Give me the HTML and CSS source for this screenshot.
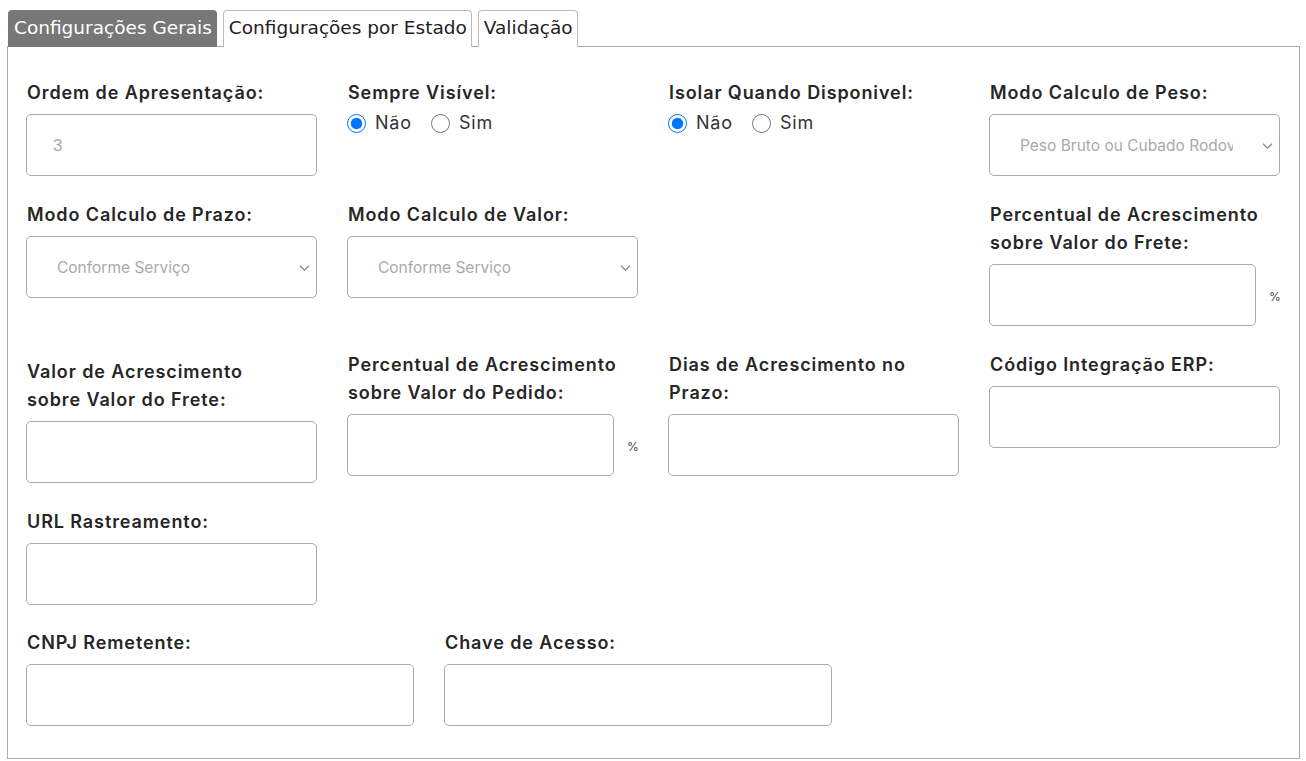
FILE: index.html
```html
<!DOCTYPE html>
<html lang="pt-BR">
<head>
    <meta charset="UTF-8">
    <meta name="viewport" content="width=device-width, initial-scale=1.0">
    <title>Configurações da Transportadora</title>
    <link rel="stylesheet" href="styles.css">
</head>

<body>
    <div class="tabs">
        <a class="tab active">Configurações Gerais</a>
        <a class="tab">Configurações por Estado</a>
        <a class="tab">Validação</a>
    </div>

    <div class="panel">
        <div class="form-grid">
            <div class="form-group">
                <label for="ordem">Ordem de Apresentação:</label>
                <input type="text" id="ordem" class="field" value="3">
            </div>
            <div class="form-group">
                <label>Sempre Visível:</label>
                <div class="radio-row">
                    <label class="radio"><input type="radio" name="visivel" checked> Não</label>
                    <label class="radio"><input type="radio" name="visivel"> Sim</label>
                </div>
            </div>
            <div class="form-group">
                <label>Isolar Quando Disponivel:</label>
                <div class="radio-row">
                    <label class="radio"><input type="radio" name="isolar" checked> Não</label>
                    <label class="radio"><input type="radio" name="isolar"> Sim</label>
                </div>
            </div>
            <div class="form-group">
                <label for="modoPeso">Modo Calculo de Peso:</label>
                <div class="select-wrap">
                    <select id="modoPeso" class="field">
                        <option>Peso Bruto ou Cubado Rodoviário</option>
                    </select>
                    <svg class="chevron" width="11" height="6" viewBox="0 0 11 6"><path d="M1 .8l4.5 4.4 4.5-4.4" fill="none" stroke="#8a8a8a" stroke-width="1.3"/></svg>
                </div>
            </div>

            <div class="form-group">
                <label for="modoPrazo">Modo Calculo de Prazo:</label>
                <div class="select-wrap">
                    <select id="modoPrazo" class="field">
                        <option>Conforme Serviço</option>
                    </select>
                    <svg class="chevron" width="11" height="6" viewBox="0 0 11 6"><path d="M1 .8l4.5 4.4 4.5-4.4" fill="none" stroke="#8a8a8a" stroke-width="1.3"/></svg>
                </div>
            </div>
            <div class="form-group">
                <label for="modoValor">Modo Calculo de Valor:</label>
                <div class="select-wrap">
                    <select id="modoValor" class="field">
                        <option>Conforme Serviço</option>
                    </select>
                    <svg class="chevron" width="11" height="6" viewBox="0 0 11 6"><path d="M1 .8l4.5 4.4 4.5-4.4" fill="none" stroke="#8a8a8a" stroke-width="1.3"/></svg>
                </div>
            </div>
            <div class="form-group"></div>
            <div class="form-group">
                <label for="percFrete">Percentual de Acrescimento sobre Valor do Frete:</label>
                <div class="suffix-group">
                    <input type="text" id="percFrete" class="field">
                    <span class="suffix">%</span>
                </div>
            </div>

            <div class="form-group shifted">
                <label for="valorFrete">Valor de Acrescimento<br>sobre Valor do Frete:</label>
                <input type="text" id="valorFrete" class="field">
            </div>
            <div class="form-group">
                <label for="percPedido">Percentual de Acrescimento sobre Valor do Pedido:</label>
                <div class="suffix-group">
                    <input type="text" id="percPedido" class="field">
                    <span class="suffix">%</span>
                </div>
            </div>
            <div class="form-group">
                <label for="diasPrazo">Dias de Acrescimento no Prazo:</label>
                <input type="text" id="diasPrazo" class="field">
            </div>
            <div class="form-group">
                <label for="codigoErp">Código Integração ERP:</label>
                <input type="text" id="codigoErp" class="field">
            </div>

            <div class="form-group">
                <label for="urlRastreamento">URL Rastreamento:</label>
                <input type="text" id="urlRastreamento" class="field">
            </div>
        </div>

        <div class="form-grid wide">
            <div class="form-group">
                <label for="cnpj">CNPJ Remetente:</label>
                <input type="text" id="cnpj" class="field">
            </div>
            <div class="form-group">
                <label for="chave">Chave de Acesso:</label>
                <input type="text" id="chave" class="field">
            </div>
        </div>
    </div>
</body>
</html>
```

FILE: styles.css
```css
* {
    margin: 0;
    padding: 0;
    box-sizing: border-box;
}

body {
    font-family: 'Inter', 'Liberation Sans', sans-serif;
    background-color: #ffffff;
    padding: 10px 6px 0 7px;
}

.tabs {
    display: flex;
    gap: 6px;
    padding-left: 1px;
}

.tab {
    display: block;
    height: 37px;
    padding: 5px 4px 0 5px;
    margin-bottom: -1px;
    font-family: 'DejaVu Sans', Verdana, sans-serif;
    font-size: 18.5px;
    line-height: 23px;
    color: #222222;
    background-color: #ffffff;
    border: 1px solid #bbbbbb;
    border-bottom: none;
    border-radius: 4px 4px 0 0;
}

.tab.active {
    background-color: #777777;
    border-color: #777777;
    color: #ffffff;
}

.panel {
    border: 1px solid #aaaaaa;
    padding: 32px 18px 30px 18px;
    height: 713px;
}

.form-grid {
    display: grid;
    grid-template-columns: repeat(4, 291px);
    column-gap: 30px;
    row-gap: 25px;
    align-items: start;
}

.form-grid.wide {
    grid-template-columns: repeat(2, 388px);
    margin-top: 24px;
}

.form-group > label {
    display: block;
    font-size: 18px;
    line-height: 28px;
    font-weight: 600;
    letter-spacing: 0.9px;
    color: #262626;
    margin-bottom: 7px;
    padding-left: 1px;
}

.form-group.shifted {
    margin-top: 7px;
}

.field {
    display: block;
    width: 100%;
    height: 62px;
    border: 1px solid #aaaaaa;
    border-radius: 5px;
    background-color: #ffffff;
    font-family: 'Liberation Sans', Arial, sans-serif;
    font-size: 17px;
    color: #aaaaaa;
    padding: 2px 26px 0;
    outline: none;
}

.select-wrap {
    position: relative;
}

select.field {
    appearance: none;
    -webkit-appearance: none;
    font-family: 'Inter', sans-serif;
    font-size: 15.5px;
    color: #a9a9a9;
    padding: 0 46px 0 30px;
}

.chevron {
    position: absolute;
    right: 7px;
    top: 29px;
    pointer-events: none;
}

.suffix-group {
    display: flex;
    align-items: center;
}

.suffix-group .field {
    flex: 1;
}

.suffix {
    width: 24px;
    padding-left: 13px;
    font-size: 12px;
    color: #444444;
    padding-top: 3px;
}

.radio-row {
    display: flex;
    gap: 19px;
    margin-top: -1px;
}

.radio {
    display: flex;
    align-items: center;
    gap: 9px;
    font-size: 18px;
    letter-spacing: 0.8px;
    color: #333333;
    line-height: 20px;
}

.radio input {
    width: 19px;
    height: 19px;
    accent-color: #0075ff;
    margin: 0;
}
```
